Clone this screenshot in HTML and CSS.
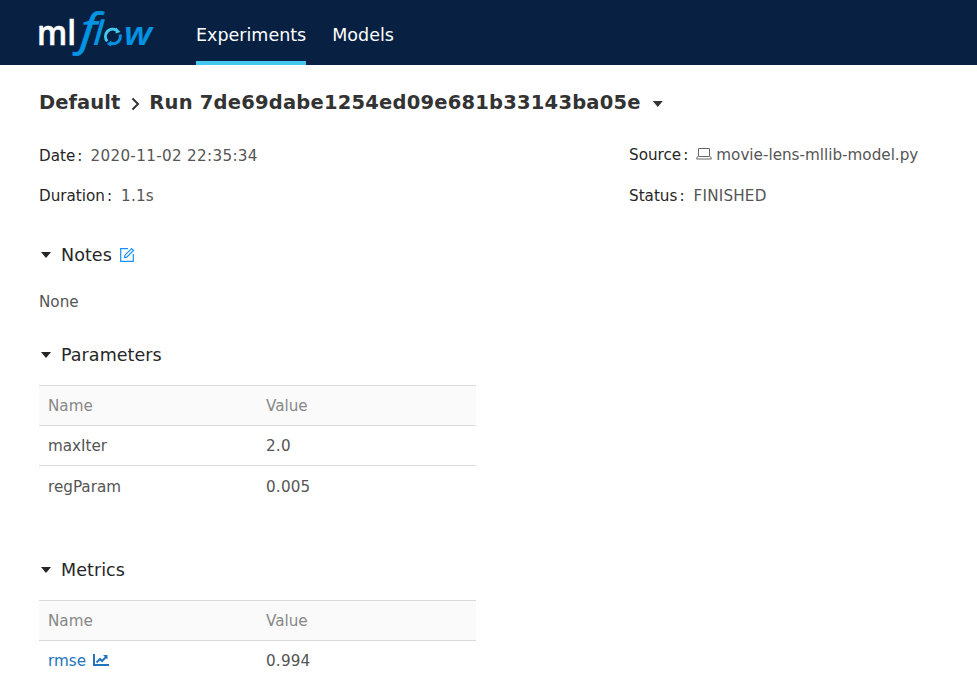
FILE: index.html
```html
<!DOCTYPE html>
<html lang="en">
<head>
<meta charset="utf-8">
<title>MLflow</title>
<link rel="stylesheet" href="styles.css">
</head>
<body>
<header class="topbar">
  <svg class="logo" width="118" height="56" viewBox="0 0 118 56" role="img" aria-label="mlflow">
    <text class="logo-ml" x="-2" y="45" textLength="39" lengthAdjust="spacingAndGlyphs">ml</text>
    <text class="logo-f" transform="translate(40.500 45) skewX(-5) scale(1.130 1)" x="0" y="0">f</text>
    <text class="logo-flow" transform="translate(54 45) skewX(-4)" x="0" y="0">l</text>
    <g class="ring">
      <path class="ring-light" d="M68.300 41.200A7.200 7.200 0 0 1 77.500 30.300"/>
      <path class="ring-dark" d="M81 34.500A7.200 7.200 0 0 1 71.500 43.200"/>
      <path class="head-light" d="M77 27.500l4.500 4.500-5 1.500z"/>
      <path class="head-dark" d="M72.200 40.500v6l-4.500-2.500z"/>
    </g>
    <text class="logo-w" x="85" y="45" textLength="28" lengthAdjust="spacingAndGlyphs">w</text>
  </svg>
  <nav class="nav"><a class="active">Experiments</a><a>Models</a></nav>
</header>
<main>
  <h1><span class="crumb">Default</span><svg class="chevron" width="9" height="14" viewBox="0 0 9 14"><path d="M1.500 1.500L7 7l-5.500 5.500"/></svg><span class="run">Run 7de69dabe1254ed09e681b33143ba05e</span><i class="caret"></i></h1>
  <dl class="meta">
    <div><dt>Date<b>:</b></dt><dd class="date">2020-11-02 22:35:34</dd></div>
    <div class="source"><dt>Source<b>:</b></dt><dd><svg class="laptop" width="16" height="12" viewBox="0 0 16 12"><path d="M2.500 8.500v-8h11v8zM1.500 8.500L.6 11h14.800l-.9-2.500"/></svg>movie-lens-mllib-model.py</dd></div>
    <div><dt>Duration<b>:</b></dt><dd class="wide">1.1s</dd></div>
    <div><dt>Status<b>:</b></dt><dd class="wide">FINISHED</dd></div>
  </dl>
  <section class="notes">
    <h2><i class="caret"></i>Notes<svg class="edit" width="16" height="16" viewBox="0 0 16 16"><path d="M9 1.700H1.700v12.600h12.600V7"/><path d="M5.500 10.500l.4-2.300L12.600 1.500l1.900 1.900-6.700 6.700z"/></svg></h2>
    <p>None</p>
  </section>
  <section class="params">
    <h2><i class="caret"></i>Parameters</h2>
    <table>
      <tr><th>Name</th><th>Value</th></tr>
      <tr><td>maxIter</td><td>2.0</td></tr>
      <tr class="last tall"><td>regParam</td><td>0.005</td></tr>
    </table>
  </section>
  <section class="metrics">
    <h2><i class="caret"></i>Metrics</h2>
    <table>
      <tr><th>Name</th><th>Value</th></tr>
      <tr class="last"><td><a>rmse<svg class="chart" width="16" height="12" viewBox="0 0 16 12"><path d="M1 0v11h15"/><path d="M3.500 8.500L7 5l2 2 4-4"/><path class="tip" d="M10 1h4.500v4.500z"/></svg></a></td><td>0.994</td></tr>
    </table>
  </section>
</main>
</body>
</html>
```
FILE: styles.css
```css
* { box-sizing: border-box; }
body { margin: 0; height: 689px; overflow: hidden; background: #fff; color: #555; font: 15.2px/20px "DejaVu Sans", sans-serif; }
h1, h2, p, dl, dd { margin: 0; }
.topbar { display: flex; height: 65px; padding-left: 39px; background: #082142; }
.logo { margin-top: 0; overflow: visible; }
.logo text { fill: #0194e2; }
.logo .logo-ml { fill: #fff; font: 600 34px "Open Sans", sans-serif; stroke: #fff; stroke-width: .5; }
.logo-f { font: italic 44px "Open Sans", sans-serif; stroke: #0194e2; stroke-width: .8; }
.logo-flow { font: italic 600 34px "Open Sans", sans-serif; }
.logo-w { font: italic 600 32px "Open Sans", sans-serif; stroke: #0194e2; stroke-width: .2; }
.ring path { fill: none; stroke-width: 3; }
.ring .ring-light { stroke: #43c9ed; }
.ring .ring-dark { stroke: #0194e2; }
.ring .head-light { fill: #43c9ed; }
.ring .head-dark { fill: #0194e2; }
.nav { display: flex; gap: 26px; margin-left: 39px; font-size: 17.5px; color: #fff; }
.nav a { height: 65px; padding-top: 25px; border-bottom: 4px solid transparent; }
.nav .active { border-color: #43c9ed; }
main { padding: 26px 39px 0; }
h1 { display: flex; align-items: center; height: 24px; color: #333; font-size: 19.5px; line-height: 24px; white-space: nowrap; }
.crumb { letter-spacing: .05px; }
.run { letter-spacing: .22px; }
.chevron { margin: 1px 9px 0 11px; fill: none; stroke: #333; stroke-width: 2; }
.caret { width: 10px; height: 6px; background: currentColor; clip-path: polygon(0 0, 100% 0, 50% 100%); }
h1 .caret { margin: 2px 0 0 12px; }
.meta { display: grid; grid-template-columns: 590px 1fr; row-gap: 20px; margin-top: 31px; }
.meta div { display: flex; }
.meta .source { position: relative; top: -1px; }
dt { color: #262626; margin-right: 8px; }
dt b { font-weight: 400; margin-left: 2px; }
.date { letter-spacing: .32px; }
.wide { padding-left: 1px; letter-spacing: .2px; }
.laptop { margin-right: 4px; fill: none; stroke: #666; }
.notes { margin-top: 38px; }
h2 { display: flex; align-items: center; height: 22px; padding-left: 2px; color: #262626; font-size: 17.5px; font-weight: 400; line-height: 22px; letter-spacing: .06px; }
h2 .caret { margin: 0 10px 0 0; }
.edit { margin-left: 7px; fill: none; stroke: #1890ff; stroke-width: 1.2; }
.notes p { margin-top: 26px; }
.params { margin-top: 32px; }
.metrics { margin-top: 52px; }
table { width: 437px; margin-top: 19px; border-spacing: 0; table-layout: fixed; }
th, td { height: 40px; padding: 0 9px; border-bottom: 1px solid #d9d9d9; text-align: left; font-weight: 400; }
th { height: 41px; border-top: 1px solid #d9d9d9; background: #fafafa; color: #888; }
th + th, td + td { padding-left: 8.500px; }
td + td { letter-spacing: .2px; }
.last td { border: 0; }
.tall td { height: 41px; }
td a { color: #2374bb; }
.chart { margin-left: 7px; fill: none; stroke: #2374bb; stroke-width: 2; }
.chart .tip { fill: #2374bb; stroke: none; }
```
